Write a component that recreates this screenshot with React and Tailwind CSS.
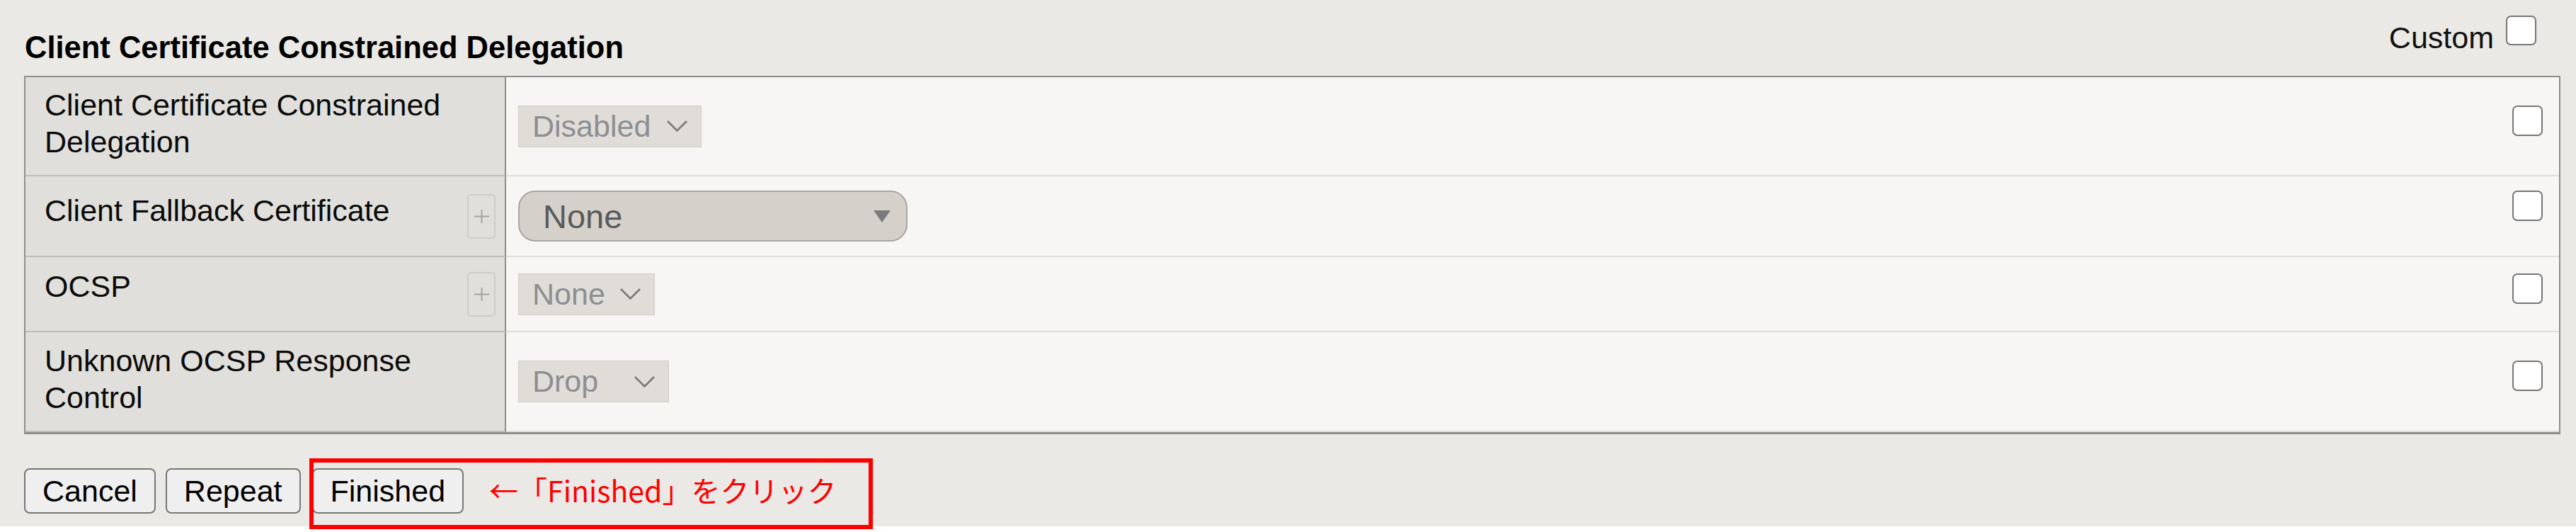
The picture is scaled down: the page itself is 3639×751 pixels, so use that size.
import React from "react";

const rows = [
  {
    label: "Client Certificate Constrained Delegation",
    rowH: "h-[140px]",
    pt: "pt-[13px]",
    plus: false,
    select: { kind: "plain", value: "Disabled", w: "w-[259px]" },
  },
  {
    label: "Client Fallback Certificate",
    rowH: "h-[114px]",
    pt: "pt-[22px]",
    plus: true,
    select: { kind: "rich", value: "None" },
  },
  {
    label: "OCSP",
    rowH: "h-[106px]",
    pt: "pt-[15px]",
    plus: true,
    select: { kind: "plain", value: "None", w: "w-[193px]" },
  },
  {
    label: "Unknown OCSP Response Control",
    rowH: "h-[141px]",
    pt: "pt-[14px]",
    plus: false,
    select: { kind: "plain", value: "Drop", w: "w-[213px]" },
  },
];

function Chevron() {
  return (
    <svg width="31" height="18" viewBox="0 0 31 18" fill="none">
      <polyline points="2,2 15.5,15.5 29,2" stroke="#787878" strokeWidth="2.6" />
    </svg>
  );
}

function Checkbox({ size = "w-[43px] h-[43px]" }) {
  return <div className={`${size} shrink-0 rounded-[7px] border-2 border-[#767676] bg-white`} />;
}

function PlainSelect({ value, w }) {
  return (
    <div
      className={`${w} h-[59px] flex items-center justify-between pl-[19px] pr-[18px] bg-[#e0ddd8] border border-[#cfccc6] text-[43px] leading-none text-[#8d8e91]`}
    >
      <span>{value}</span>
      <Chevron />
    </div>
  );
}

function RichSelect({ value }) {
  return (
    <div className="w-[550px] h-[72px] flex items-center justify-between pl-[33px] pr-[22px] rounded-[24px] border-2 border-[#a8a6a1] bg-[#d5d1ca] text-[47px] leading-none text-[#5a5a5a]">
      <span>{value}</span>
      <svg width="24" height="17" viewBox="0 0 24 17">
        <polygon points="0,0 24,0 12,17" fill="#7a7a7a" />
      </svg>
    </div>
  );
}

function PlusButton() {
  return (
    <div className="w-[40px] h-[63px] shrink-0 flex items-center justify-center rounded-[5px] border-2 border-[#cdcccb]">
      <svg width="21" height="19" viewBox="0 0 21 19">
        <line x1="0" y1="9.5" x2="21" y2="9.5" stroke="#a19f9d" strokeWidth="1.8" />
        <line x1="10.5" y1="0" x2="10.5" y2="19" stroke="#a19f9d" strokeWidth="1.8" />
      </svg>
    </div>
  );
}

function Button({ children }) {
  return (
    <button className="h-[64px] px-[24px] rounded-[8px] border-2 border-[#777] bg-[#efefef] text-[43px] leading-none text-black">
      {children}
    </button>
  );
}

export default function App() {
  return (
    <div className="w-full h-[751px] bg-white font-['Liberation_Sans',Arial,sans-serif]">
      <div className="h-[743px] bg-[#ebe9e5]">
        {/* header */}
        <div className="h-[107px] flex justify-between items-start pl-[35px] pr-[56px]">
          <h2 className="mt-[42px] text-[43.5px] leading-[50px] font-bold text-black">
            Client Certificate Constrained Delegation
          </h2>
          <div className="flex items-start gap-[17px]">
            <span className="mt-[28px] text-[43px] leading-[50px] text-[#111]">Custom</span>
            <div className="mt-[22px]">
              <Checkbox size="w-[43px] h-[42px]" />
            </div>
          </div>
        </div>

        {/* settings table */}
        <div className="ml-[34px] mr-[22px] border-x-2 border-t-2 border-b-[3px] border-[#8e8e8e]">
          {rows.map((row) => (
            <div key={row.label} className={`${row.rowH} flex`}>
              <div className="w-[679px] shrink-0 flex items-center justify-between pl-[27px] pr-[13px] bg-[#e0dfdb] border-r-2 border-r-[#8e8e8e] border-b-2 border-b-[#bebdb9]">
                <div className={`self-start ${row.pt} pr-[12px] text-[43px] leading-[52px] text-[#0a0a0a]`}>
                  {row.label}
                </div>
                {row.plus && <PlusButton />}
              </div>
              <div className="flex-1 flex items-center pl-[17px] pr-[23px] bg-[#f7f6f4] border-b-2 border-b-[#dfdedc]">
                <div className="w-full flex items-start justify-between">
                  {row.select.kind === "rich" ? (
                    <RichSelect value={row.select.value} />
                  ) : (
                    <PlainSelect value={row.select.value} w={row.select.w} />
                  )}
                  <Checkbox />
                </div>
              </div>
            </div>
          ))}
        </div>

        {/* actions */}
        <div className="relative mt-[48px] pl-[34px] flex items-center">
          <div className="flex items-center gap-[14px]">
            <Button>Cancel</Button>
            <Button>Repeat</Button>
            <div className="ml-[2px]">
              <Button>Finished</Button>
            </div>
          </div>
          <span className="ml-[36px] mt-[-4px] text-[41px] leading-[50px] text-[#ff0000] font-['Noto_Sans_CJK_JP',sans-serif]">
            ←「Finished」をクリック
          </span>
          <div className="absolute left-[437px] top-[-14px] w-[796px] h-[100px] border-[6px] border-[#ff0000] pointer-events-none" />
        </div>
      </div>
    </div>
  );
}
